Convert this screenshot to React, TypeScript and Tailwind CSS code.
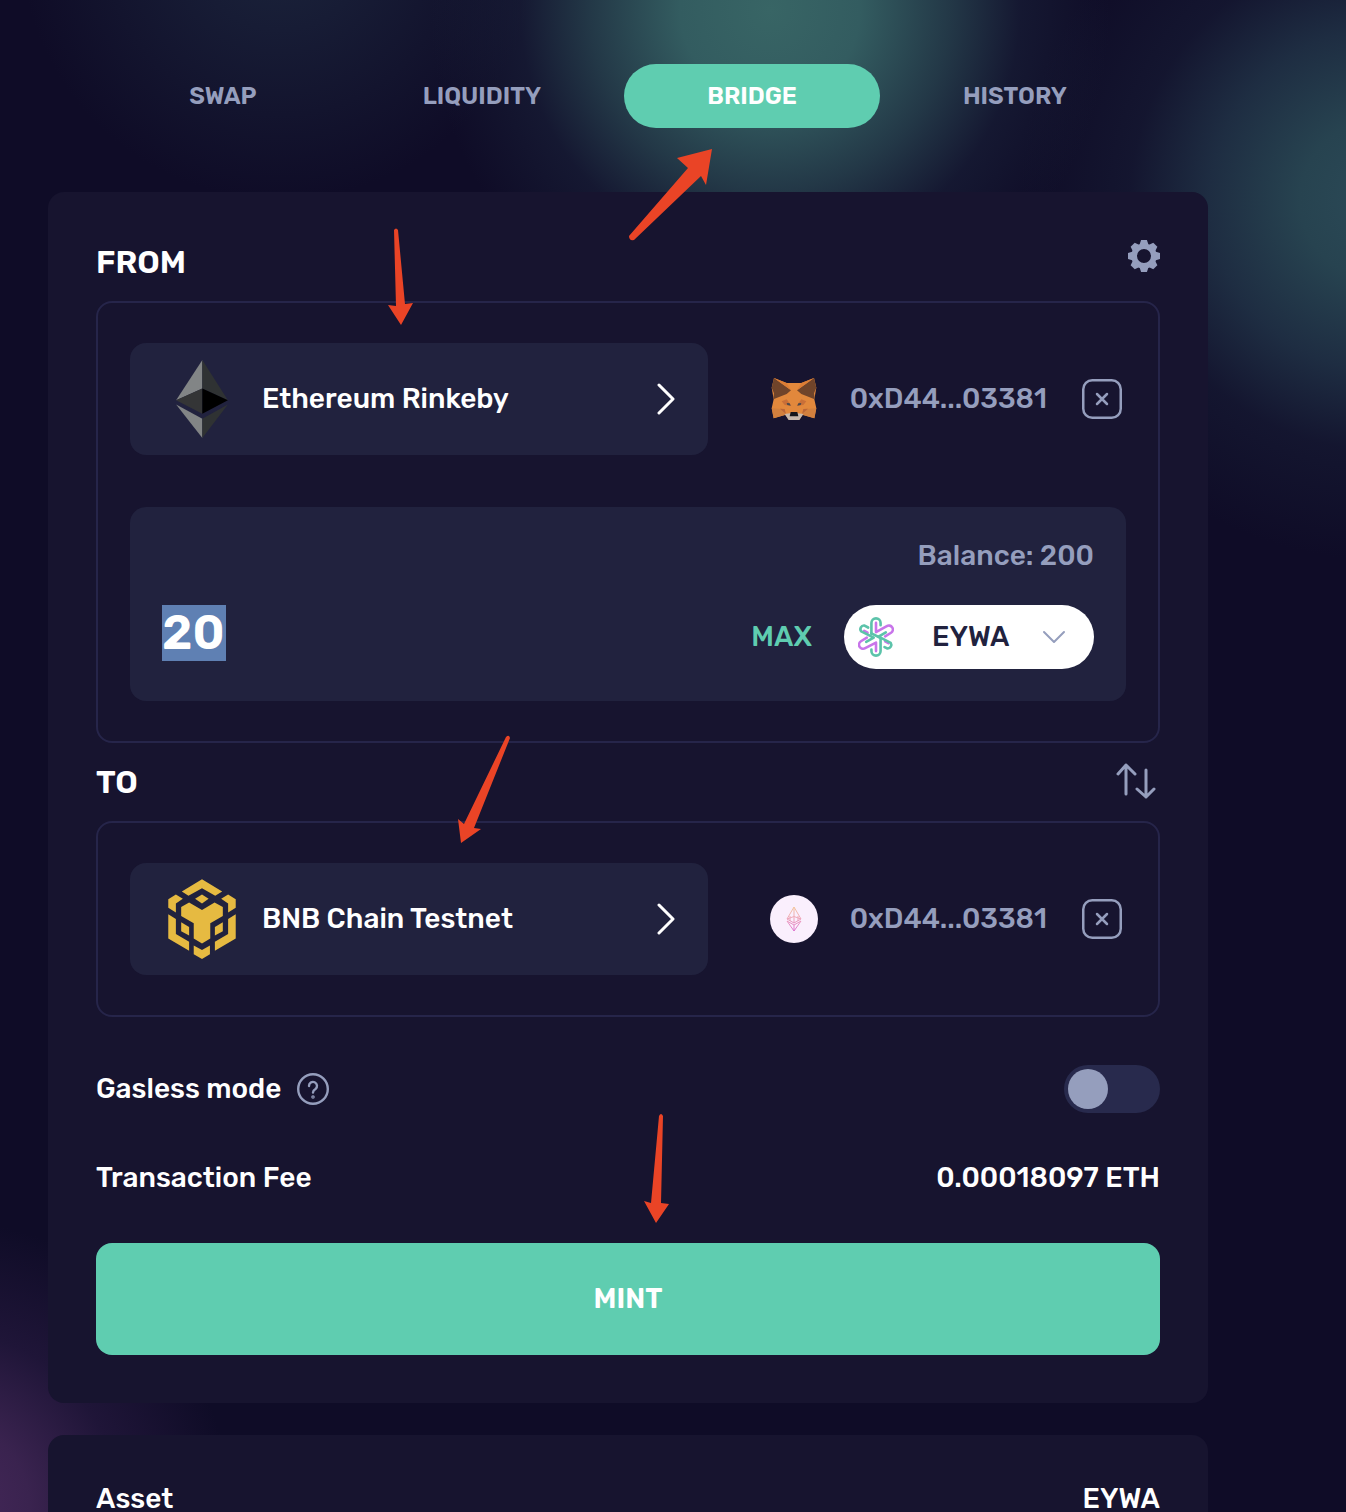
import { useState } from 'react';

const TABS = ['SWAP', 'LIQUIDITY', 'BRIDGE', 'HISTORY'];
const GEAR_TEETH = [0, 45, 90, 135, 180, 225, 270, 315];

function EthereumLogo() {
  return (
    <svg className="h-[78px] w-[52px]" viewBox="0 0 156 235" aria-hidden>
      <path d="M79 0 0 121l79-35z" fill="#828586" />
      <path d="M79 0v86l77 35z" fill="#2f3233" />
      <path d="M0 121l79-35v76z" fill="#343536" />
      <path d="M79 86l77 35-77 41z" fill="#000" />
      <path d="M0 134l79 43v58z" fill="#828586" />
      <path d="M156 134l-77 43v58z" fill="#2f3233" />
    </svg>
  );
}

function BnbLogo() {
  return (
    <svg className="h-20 w-[70px]" viewBox="112 56 208 242" fill="#e6ba41" aria-hidden>
      <path d="M216 57 277 94 256 107 216 84 175 107 155 94z" />
      <path d="M216 103 236 116 216 130 195 116z" />
      <path d="M137 103 158 116 137 130 137 157 114 143 114 117z" />
      <path d="M295 103 274 116 295 130 295 157 318 143 318 117z" />
      <path d="M114 163 137 177 137 222 177 246 177 273 114 236z" />
      <path d="M318 163 295 177 295 222 255 246 255 273 318 236z" />
      <path d="M177 127 216 150 254 127 279 141 279 168 241 190 241 236 216 251 191 236 191 190 153 168 153 141z" />
      <path d="M153 187 177 201 177 227 153 214z" />
      <path d="M279 187 255 201 255 227 279 214z" />
      <path d="M191 257 216 271 240 257 240 284 216 298 191 284z" />
    </svg>
  );
}

function FoxLogo() {
  return (
    <svg className="h-12 w-12 shrink-0" viewBox="390 105 144 144" aria-hidden>
      <path
        d="M402 114 440 129H484L522 114 529 143 523 178 529 205 523 235 488 224 478 239H446L436 224 401 235 395 205 401 178 395 143z"
        fill="#e2883c"
      />
      <path d="M402 114 453 151 440 162 400 178 402 160 395 143z" fill="#70442a" />
      <path d="M522 114 471 151 484 162 524 178 522 160 529 143z" fill="#70442a" />
      <path d="M402 114 440 129 453 151z" fill="#dc7d35" />
      <path d="M522 114 484 129 471 151z" fill="#dc7d35" />
      <path d="M395 205 430 207 438 224 401 235z" fill="#d2803e" />
      <path d="M529 205 494 207 486 224 523 235z" fill="#d2803e" />
      <path d="M425 184 440 178 454 197 434 195z" fill="#c96f38" />
      <path d="M499 184 484 178 470 197 490 195z" fill="#c96f38" />
      <path d="M420 206 434 207 438 222z" fill="#bb6638" />
      <path d="M504 206 490 207 486 222z" fill="#bb6638" />
      <path d="M440 189 449 190 452 197 442 195z" fill="#4b4a4c" />
      <path d="M484 189 475 190 472 197 482 195z" fill="#4b4a4c" />
      <path d="M434 222 450 220H474L490 222 478 240H446z" fill="#c7b8ab" />
      <path d="M452 216H472L475 229H449z" fill="#15161b" />
    </svg>
  );
}

function WalletLogo() {
  return (
    <svg className="h-12 w-12 shrink-0" viewBox="0 0 48 48" fill="none" aria-hidden>
      <defs>
        <linearGradient id="wallet" x1="24" y1="12" x2="24" y2="36" gradientUnits="userSpaceOnUse">
          <stop stopColor="#f3c79c" />
          <stop offset="0.5" stopColor="#eda3ba" />
          <stop offset="1" stopColor="#dd73d0" />
        </linearGradient>
      </defs>
      <circle cx="24" cy="24" r="24" fill="#faeffd" />
      <path
        d="M24 12 17 24l7 4 7-4zM24 12v9.500M17 24l7-2.500 7 2.500M24 21.500V28M17 26l7 10 7-10-7 4zM24 30v6M20 21v5M28 21v5"
        stroke="url(#wallet)"
        strokeWidth="1"
        strokeLinejoin="round"
      />
    </svg>
  );
}

function EywaLogo() {
  return (
    <svg
      className="h-10 w-9 shrink-0"
      viewBox="383 290 110 122"
      fill="none"
      strokeWidth="8"
      strokeLinecap="round"
      strokeLinejoin="round"
      aria-hidden
    >
      <g stroke="#c875ea">
        <path d="M438 308V336L471 318A11 11 0 0 1 484 338L466 349" />
        <path d="M438 394V368L405 385A11 11 0 0 1 392 364L410 353" />
        <path d="M402 332 412 338M466 364 476 370" />
      </g>
      <g stroke="#5cc3aa">
        <path d="M424 342V308A14 14 0 0 1 452 308V315" />
        <path d="M424 389V394A14 14 0 0 0 452 394V354L424 340" />
        <path d="M468 337 446 350 483 369A11 11 0 0 1 473 386L464 382" />
        <path d="M408 366 431 353 393 334A11 11 0 0 1 403 316L414 322" />
      </g>
    </svg>
  );
}

function GearIcon() {
  return (
    <svg className="h-8 w-8" viewBox="-16 -16 32 32" aria-hidden>
      <circle r="9.800" fill="none" stroke="#959ebd" strokeWidth="5.600" />
      {GEAR_TEETH.map((angle) => (
        <path key={angle} d="M-4.600-11-2.900-16H2.900L4.600-11z" fill="#959ebd" transform={`rotate(${angle})`} />
      ))}
    </svg>
  );
}

function Chevron() {
  return (
    <svg className="h-8 w-5 shrink-0" viewBox="0 0 20 32" fill="none" stroke="white" strokeWidth="3" strokeLinecap="round" strokeLinejoin="round" aria-hidden>
      <path d="M3 2 17 16 3 30" />
    </svg>
  );
}

type ChainRowProps = {
  chain: string;
  chainLogo: React.ReactNode;
  walletLogo: React.ReactNode;
};

function ChainRow({ chain, chainLogo, walletLogo }: ChainRowProps) {
  return (
    <div className="flex items-center">
      <button className="flex h-28 w-[58%] items-center rounded-2xl bg-[#21223e] px-8 text-left">
        <span className="mr-5 flex w-20 shrink-0 justify-center">{chainLogo}</span>
        <span className="flex-1">{chain}</span>
        <Chevron />
      </button>
      <div className="mr-1 ml-[62px] flex flex-1 items-center">
        {walletLogo}
        <span className="ml-8 flex-1 text-[#959ebd]">0xD44...03381</span>
        <button aria-label="Disconnect wallet">
          <svg className="h-10 w-10" viewBox="0 0 40 40" fill="none" stroke="#959ebd" strokeWidth="2.500" strokeLinecap="round" aria-hidden>
            <rect x="1.250" y="1.250" width="37.500" height="37.500" rx="9" />
            <path d="M15 15 25 25M25 15 15 25" />
          </svg>
        </button>
      </div>
    </div>
  );
}

// Hand-drawn pointers laid over the page
function Arrows() {
  return (
    <svg className="pointer-events-none absolute top-0 left-0 z-10 h-[1300px] w-[800px]" viewBox="0 0 800 1300" fill="#ea4426" aria-hidden>
      <path d="M712 149 677 158 688 168 629 236Q629 241 634 240L701 176 706 185z" />
      <path d="M394 230Q396 227 398 230L405 304 413 303 401 325 388 305 396 306z" />
      <path d="M506 737Q509 734 510 738L474 828 481 829 461 843 458 819 464 824z" />
      <path d="M659 1116Q661 1112 663 1116L661 1203 669 1204 656 1223 644 1201 651 1203z" />
    </svg>
  );
}

export default function App() {
  const [tab, setTab] = useState('BRIDGE');
  const [amount, setAmount] = useState('20');
  const [gasless, setGasless] = useState(false);

  return (
    <div className="relative h-screen overflow-hidden bg-[#0f0c27] bg-[radial-gradient(circle_at_770px_10px,#386565_0px,#335c60_90px,#28434fcc_180px,#1b243c80_250px,#1b243c00_340px),radial-gradient(circle_at_1380px_200px,#2b4a57_0px,#274350_80px,#1e2d42_170px,#171c3599_250px,#15193100_360px),radial-gradient(circle_at_280px_-60px,#1b243b_0px,#171c35_90px,#171c3500_260px),radial-gradient(circle_at_-60px_1510px,#48295c_0px,#3a234f_90px,#1f1538_180px,#1f153800_290px)] font-['Rubik','Inter',sans-serif] text-[28px] leading-8 font-medium text-white">
      <Arrows />

      <main className="mr-[138px] ml-12 pt-16">
        <nav className="flex justify-center">
          {TABS.map((name) => (
            <button
              key={name}
              onClick={() => setTab(name)}
              className={`h-16 rounded-full px-[83px] text-2xl font-semibold ${
                tab === name ? 'bg-[#5fcdb0] text-white' : 'text-[#959ebd]'
              }`}
            >
              {name}
            </button>
          ))}
        </nav>

        <section className="mt-16 rounded-2xl bg-[#17142f] p-12">
          <div className="flex items-start justify-between pb-[23px]">
            <h2 className="pt-1.5 text-[32px] leading-8 font-semibold">FROM</h2>
            <button aria-label="Settings">
              <GearIcon />
            </button>
          </div>

          <div className="rounded-2xl border-2 border-[#26254a] px-8 py-10">
            <ChainRow chain="Ethereum Rinkeby" chainLogo={<EthereumLogo />} walletLogo={<FoxLogo />} />

            <div className="mt-[52px] rounded-2xl bg-[#21223e] px-8 pt-[33px] pb-8">
              <p className="text-right text-[#959ebd]">Balance: 200</p>
              <div className="mt-[33px] flex items-start justify-between">
                <input
                  aria-label="Amount"
                  value={amount}
                  onChange={(e) => setAmount(e.target.value)}
                  className="h-14 w-16 bg-[#5f80b3] pb-0.5 text-5xl font-semibold outline-none"
                />
                <div className="flex items-center gap-8">
                  <button className="text-[#5fcdb0]">MAX</button>
                  <div className="flex h-16 w-[250px] items-center rounded-full bg-white pr-7 pl-[14px]">
                    <EywaLogo />
                    <select aria-label="Token" className="ml-[38px] flex-1 appearance-none bg-transparent text-[#21223e] outline-none">
                      <option>EYWA</option>
                    </select>
                    <svg className="h-6 w-6" viewBox="0 0 24 24" fill="none" stroke="#959ebd" strokeWidth="2" strokeLinecap="round" strokeLinejoin="round" aria-hidden>
                      <path d="M2 7 12 17 22 7" />
                    </svg>
                  </div>
                </div>
              </div>
            </div>
          </div>

          <div className="flex h-[78px] items-center justify-between">
            <h2 className="text-[32px] font-semibold">TO</h2>
            <button aria-label="Switch direction" className="pr-1 pb-0.5">
              <svg className="h-9 w-10" viewBox="0 0 40 36" fill="none" stroke="#959ebd" strokeWidth="3" strokeLinecap="round" strokeLinejoin="round" aria-hidden>
                <path d="M10 31V2M2 11 10 2 19 11M30 7V34M21 26 30 34 38 26" />
              </svg>
            </button>
          </div>

          <div className="rounded-2xl border-2 border-[#26254a] px-8 py-10">
            <ChainRow chain="BNB Chain Testnet" chainLogo={<BnbLogo />} walletLogo={<WalletLogo />} />
          </div>

          <div className="mt-12 flex items-center">
            <label htmlFor="gasless">Gasless mode</label>
            <svg className="ml-4 h-8 w-8" viewBox="0 0 32 32" fill="none" stroke="#959ebd" strokeWidth="2.400" strokeLinecap="round" aria-hidden>
              <circle cx="16" cy="16" r="14.800" />
              <path d="M12 13A4 4 0 1 1 18.500 16Q16 17.500 16 19.500" />
              <circle cx="16" cy="24" r="0.600" />
            </svg>
            <input
              id="gasless"
              type="checkbox"
              checked={gasless}
              onChange={(e) => setGasless(e.target.checked)}
              className="ml-auto h-12 w-24 appearance-none rounded-full bg-[#282a4d] p-1 before:block before:h-10 before:w-10 before:rounded-full before:bg-[#959ebd] checked:before:ml-12"
            />
          </div>

          <div className="mt-[49px] flex items-center justify-between">
            <span>Transaction Fee</span>
            <span>0.00018097 ETH</span>
          </div>

          <button className="mt-[49px] h-28 w-full rounded-2xl bg-[#5fcdb0] font-semibold">MINT</button>
        </section>

        <section className="mt-8 rounded-2xl bg-[#17142f] p-12">
          <div className="flex items-center justify-between">
            <span>Asset</span>
            <span>EYWA</span>
          </div>
        </section>
      </main>
    </div>
  );
}
